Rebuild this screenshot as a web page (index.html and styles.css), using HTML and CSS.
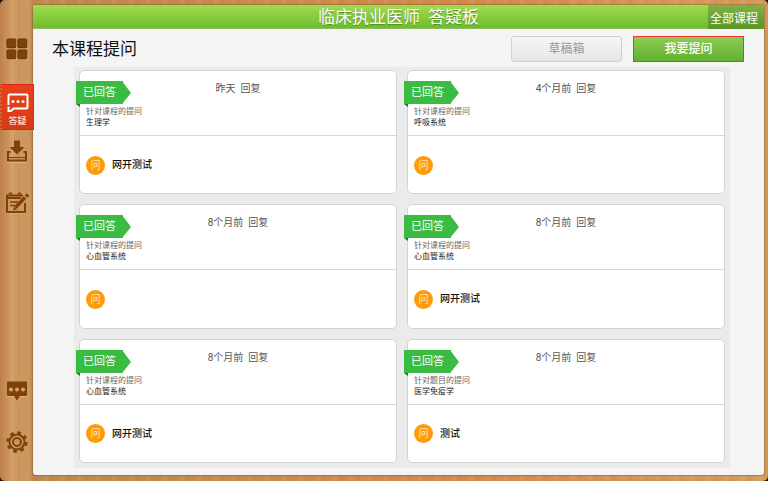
FILE: index.html
```html
<!DOCTYPE html>
<html lang="zh-CN">
<head>
<meta charset="utf-8">
<title>临床执业医师 答疑板</title>
<link rel="stylesheet" href="styles.css">
</head>
<body>
<nav class="rail">
  <a class="rail-link first" href="#" aria-label="课程">
    <svg width="22" height="22" viewBox="0 0 22 22"><g fill="#e0b27a"><rect x="1" y="2" width="10" height="9" rx="1.500"/><rect x="12" y="2" width="10" height="9" rx="1.500"/><rect x="1" y="13" width="10" height="9" rx="1.500"/><rect x="12" y="13" width="10" height="9" rx="1.500"/></g><g fill="#7f4108" stroke="#643208" stroke-width=".8"><rect x=".9" y=".9" width="9" height="9" rx="1.200"/><rect x="11.900" y=".9" width="9" height="9" rx="1.200"/><rect x=".9" y="11.900" width="9" height="9" rx="1.200"/><rect x="11.900" y="11.900" width="9" height="9" rx="1.200"/></g></svg>
  </a>
  <a class="rail-link active" href="#">
    <svg width="22" height="20" viewBox="0 0 22 20" fill="none" stroke="#fff" stroke-width="2"><path d="M1.500 12V2.500q0-1 1-1h17q1 0 1 1v12q0 1-1 1H6"/><path d="M1.500 13.500v4.500H4l2.500-2.500"/><g fill="#fff" stroke="none"><circle cx="6" cy="8.500" r="1.500"/><circle cx="11" cy="8.500" r="1.500"/><circle cx="16" cy="8.500" r="1.500"/></g></svg>
    <span>答疑</span>
  </a>
  <a class="rail-link download" href="#" aria-label="下载">
    <svg width="22" height="23" viewBox="0 0 22 23"><g stroke="#e0b27a" fill="none"><path d="M4 12.500H1.500v10h19v-10H18" stroke-width="1"/></g><path d="M8 .5h6v6.500h4.500L11 14.500 3.500 7H8z" fill="#7f4108"/><path d="M4.500 12H2v8.500h18V12h-2.500" fill="none" stroke="#7f4108" stroke-width="2"/><path d="M3 17.500h16" stroke="#7f4108" stroke-width="1"/></svg>
  </a>
  <a class="rail-link notes" href="#" aria-label="笔记">
    <svg width="24" height="22" viewBox="0 0 24 22" fill="none" stroke="#7f4108"><path d="M1 22h20" stroke="#e0b27a"/><path d="M18 3.500H2v16.500h18V11" stroke-width="2"/><path d="M2 6h14" stroke-width="2"/><path d="M5 10h8M5 13.500h5" stroke-width="1.500"/><path d="M4 2.500q1.500-3 3 0M13 2.500q1.500-3 3 0" stroke-width="1.500"/><path d="M10.500 15.500 20 5.500" stroke-width="3.500"/><path d="m21 4.500 2-2" stroke-width="3.500"/><path d="m8 18.500 1-4 3 3z" fill="#7f4108" stroke="none"/></svg>
  </a>
  <a class="rail-link chat" href="#" aria-label="消息">
    <svg width="22" height="21" viewBox="0 0 22 21"><path d="M2 2h18q1 0 1 1v12q0 1-1 1h-6l-3 5-3-5H2q-1 0-1-1V3q0-1 1-1z" fill="#e0b27a"/><path d="M2 .5h18q1 0 1 1v12.500q0 1-1 1h-6L11 20l-3-5H2q-1 0-1-1V1.500q0-1 1-1z" fill="#7f4108"/><g fill="#d9a468"><circle cx="5" cy="8.500" r="2"/><circle cx="11" cy="8.500" r="2"/><circle cx="17" cy="8.500" r="2"/></g></svg>
  </a>
  <a class="rail-link settings" href="#" aria-label="设置">
    <svg width="22" height="22" viewBox="0 0 22 22" fill="none" stroke="#7f4108"><circle cx="11" cy="11" r="7.500" stroke-width="2"/><circle cx="11" cy="11" r="4" stroke-width="2"/><circle cx="11" cy="11" r="9.500" stroke-width="2.500" stroke-dasharray="3.730 3.730"/></svg>
  </a>
</nav>
<main class="panel">
  <header class="bar">
    <h1><span>临床执业医师</span><span>答疑板</span></h1>
    <button class="all" type="button">全部课程</button>
  </header>
  <div class="tools">
    <h2>本课程提问</h2>
    <button class="drafts" type="button">草稿箱</button>
    <button class="ask" type="button">我要提问</button>
  </div>
  <section class="board">
    <article class="card">
      <div class="top"><span class="ribbon">已回答</span><p class="time"><span>昨天</span><span>回复</span></p><p class="kind">针对课程的提问</p><p class="subject">生理学</p></div>
      <div class="question"><span class="badge">问</span><p>网开测试</p></div>
    </article>
    <article class="card">
      <div class="top"><span class="ribbon">已回答</span><p class="time"><span>4个月前</span><span>回复</span></p><p class="kind">针对课程的提问</p><p class="subject">呼吸系统</p></div>
      <div class="question"><span class="badge">问</span></div>
    </article>
    <article class="card">
      <div class="top"><span class="ribbon">已回答</span><p class="time"><span>8个月前</span><span>回复</span></p><p class="kind">针对课程的提问</p><p class="subject">心血管系统</p></div>
      <div class="question"><span class="badge">问</span></div>
    </article>
    <article class="card">
      <div class="top"><span class="ribbon">已回答</span><p class="time"><span>8个月前</span><span>回复</span></p><p class="kind">针对课程的提问</p><p class="subject">心血管系统</p></div>
      <div class="question"><span class="badge">问</span><p>网开测试</p></div>
    </article>
    <article class="card">
      <div class="top"><span class="ribbon">已回答</span><p class="time"><span>8个月前</span><span>回复</span></p><p class="kind">针对课程的提问</p><p class="subject">心血管系统</p></div>
      <div class="question"><span class="badge">问</span><p>网开测试</p></div>
    </article>
    <article class="card">
      <div class="top"><span class="ribbon">已回答</span><p class="time"><span>8个月前</span><span>回复</span></p><p class="kind">针对题目的提问</p><p class="subject">医学免疫学</p></div>
      <div class="question"><span class="badge">问</span><p>测试</p></div>
    </article>
  </section>
</main>
</body>
</html>
```
FILE: styles.css
```css
* { box-sizing: border-box; }
html { background: #1c120a; }
body {
  margin: 0;
  min-height: 100vh;
  display: flex;
  padding: 5px 4px 6px 0;
  border-radius: 5px;
  font-family: Roboto, "Noto Sans CJK SC", sans-serif;
  color: #222;
  background:
    repeating-linear-gradient(90deg, rgba(150, 80, 30, .06) 0 2px, transparent 4px 9px, rgba(255, 225, 170, .08) 11px 13px, transparent 15px 17px),
    linear-gradient(90deg, #c08250, #cf9a64 12px, #cc965f 26px, #bd8950 33px, #d08c4c 60%, #d49c5c);
}
h1, h2, p { margin: 0; font-weight: 400; }
button { font: inherit; padding: 0; cursor: pointer; }

.rail { width: 33px; flex: none; display: flex; flex-direction: column; }
.rail-link { display: flex; justify-content: center; width: 34px; color: #fff; text-decoration: none; }
.rail-link svg { display: block; }
.first { margin-top: 33px; }
.active {
  flex-direction: column;
  align-items: center;
  gap: 2px;
  height: 46px;
  margin-top: 24px;
  padding-top: 6px;
  font-size: 9px;
  line-height: 12px;
  background: linear-gradient(#e4421c, #d83a14);
  border: 1px solid #e8201a;
  border-left: 2px dotted #b9713f;
  position: relative;
}
.download { margin-top: 10px; }
.notes { margin-top: 29px; }
.chat { margin-top: auto; }
.settings { margin: 29px 0 22px; }

.panel {
  flex: 1;
  min-width: 0;
  display: flex;
  flex-direction: column;
  background: #f4f4f4;
  border-radius: 3px;
  overflow: hidden;
  box-shadow: 0 0 1px 1px rgba(120, 75, 35, .4);
}
.bar {
  display: grid;
  grid-template-columns: 1fr auto 1fr;
  height: 24px;
  background: linear-gradient(#a0dc50, #6fbc2d);
  border-bottom: 1px solid #8cbd63;
  color: #fff;
}
.bar h1 {
  grid-column: 2;
  display: flex;
  gap: 8px;
  font-size: 17px;
  line-height: 24px;
  text-shadow: 0 1px 1px #4d8a20;
}
.all {
  justify-self: end;
  width: 56px;
  border: 0;
  padding-right: 4px;
  font-size: 12px;
  color: #fff;
  background: linear-gradient(#7db344, #5a9426);
}
.tools { display: flex; align-items: center; height: 38px; padding: 2px 20px 0 19px; }
.tools h2 { flex: 1; font-size: 17px; line-height: 24px; color: #111; }
.tools button { width: 111px; height: 26px; font-size: 12px; line-height: 24px; }
.tools .drafts {
  border: 1px solid #d0d0d0;
  border-radius: 3px;
  color: #999;
  background: linear-gradient(#f6f6f6, #e6e6e6);
}
.tools .ask {
  margin-left: 11px;
  border: 1px solid #f5332c;
  color: #fff;
  font-weight: 500;
  background: linear-gradient(#8ccc55, #64b030);
}
.board {
  flex: 1;
  display: grid;
  grid-template-columns: 1fr 1fr;
  grid-auto-rows: 1fr;
  gap: 10px;
  margin: 0 34px 7px 41px;
  padding: 3px 5px 5px;
  background: #ebebeb;
}
.card {
  display: flex;
  flex-direction: column;
  background: #fff;
  border: 1px solid #d3d3d3;
  border-radius: 5px;
}
.top {
  position: relative;
  height: 65px;
  padding: 10px 6px 0;
  border-bottom: 1px solid #d6d6d6;
}
.ribbon {
  position: absolute;
  left: -4px;
  top: 10px;
  width: 55px;
  height: 23px;
  padding-left: 7px;
  font-size: 11px;
  line-height: 23px;
  color: #fff;
  background: linear-gradient(#3abb42, #3abb42) 0 0 / 47px 23px no-repeat;
}
.ribbon::before {
  content: "";
  position: absolute;
  left: 46px;
  top: 0;
  border-left: 9px solid #3abb42;
  border-top: 12px solid transparent;
  border-bottom: 11px solid transparent;
}
.ribbon::after {
  content: "";
  position: absolute;
  left: 0;
  top: 23px;
  border-top: 3px solid #16801c;
  border-left: 4px solid transparent;
}
.time {
  display: flex;
  justify-content: center;
  gap: 5px;
  font-size: 10px;
  line-height: 16px;
  color: #555;
}
.kind, .subject { font-size: 8px; line-height: 11px; }
.kind { margin-top: 9px; color: #666; }
.subject { color: #222; }
.question {
  flex: 1;
  display: flex;
  align-items: center;
  gap: 7px;
  padding: 1px 6px 0;
}
.badge {
  width: 19px;
  height: 19px;
  border-radius: 50%;
  background: #ff9a0a;
  color: #ffe9b8;
  font-size: 10px;
  line-height: 19px;
  text-align: center;
}
.question p { font-size: 10px; line-height: 16px; font-weight: 500; color: #111; }
```
